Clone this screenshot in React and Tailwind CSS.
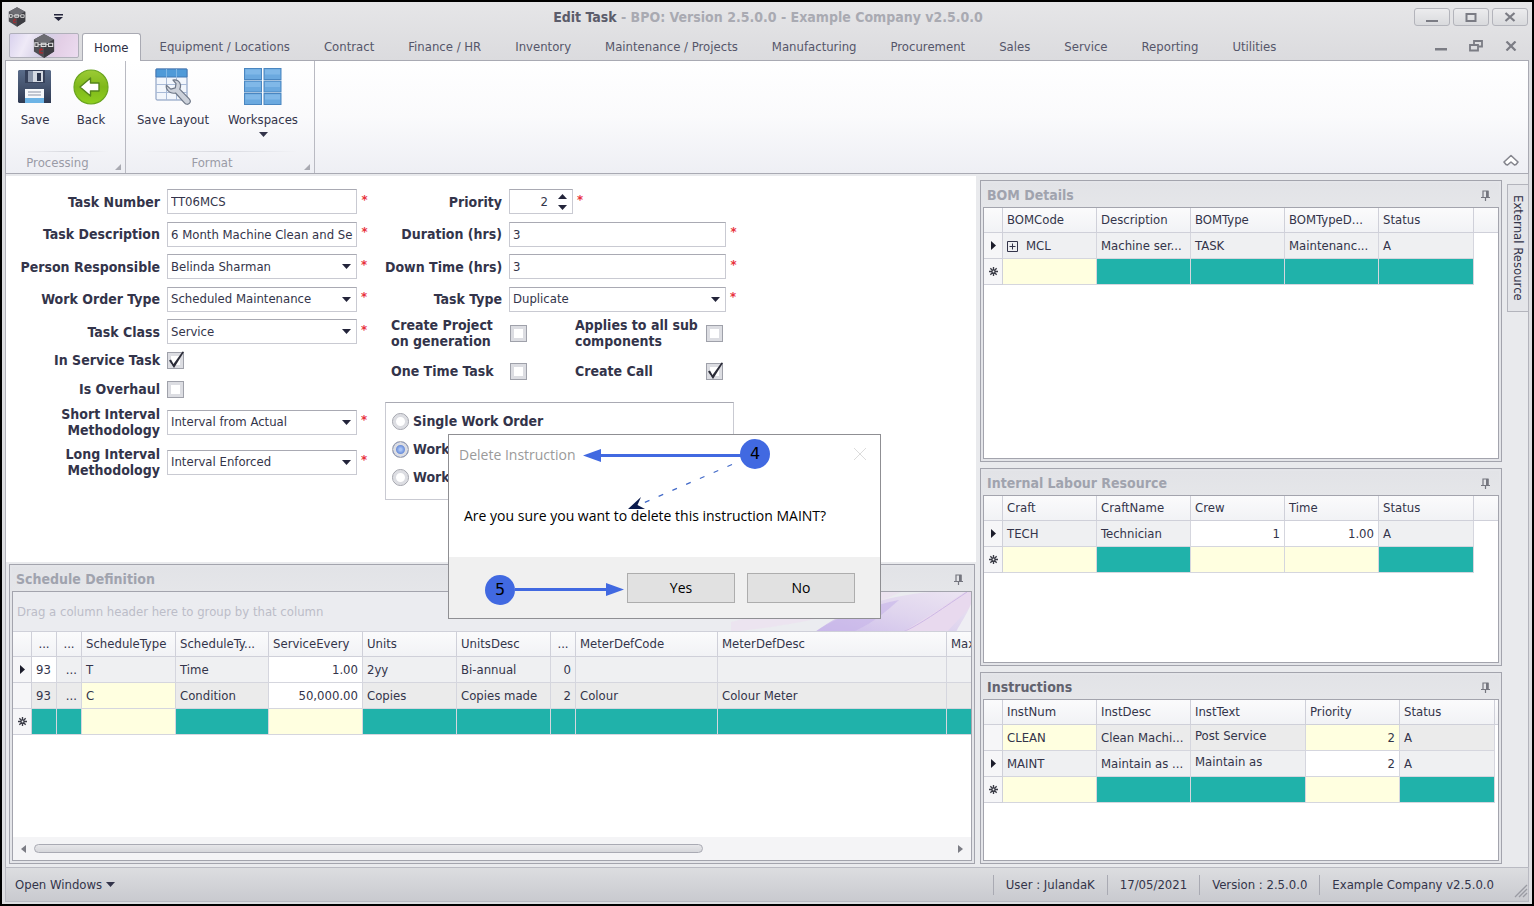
import React from "react";

const TABS = [
  "Equipment / Locations",
  "Contract",
  "Finance / HR",
  "Inventory",
  "Maintenance / Projects",
  "Manufacturing",
  "Procurement",
  "Sales",
  "Service",
  "Reporting",
  "Utilities",
];

/* ---------- icons ---------- */

function BpoLogo({ className }) {
  return (
    <svg viewBox="0 0 24 26" className={className} aria-hidden="true">
      <path d="M12 0 23 6v13l-11 7-11-7V6z" fill="#4f4f54" />
      <path d="M12 0 23 6l-11 6L1 6z" fill="#6c6c72" />
      <path d="M12 12v14l11-7V6z" fill="#3d3d42" />
      <path d="M2 9.500h3.500v4H2zM9 10h5v3.500H9zM17 10h4.500v3.500H17z" fill="none" stroke="#dcdcdc" strokeWidth="1.200" />
      <path d="M5.500 11.500h12" stroke="#dcdcdc" strokeWidth="1" />
      <path d="M11 17H7.500v3.500H11M9 15v3" fill="none" stroke="#b0282d" strokeWidth="1.200" />
    </svg>
  );
}

function Caret({ className = "w-[9px] h-[5px]" }) {
  return (
    <svg viewBox="0 0 9 5" className={className} aria-hidden="true">
      <path d="M0 0h9L4.500 5z" fill="currentColor" />
    </svg>
  );
}

function SaveIcon() {
  return (
    <svg viewBox="0 0 34 34" className="h-[34px] w-[34px]" aria-hidden="true">
      <defs>
        <linearGradient id="floppy" x1="0" y1="0" x2="0" y2="1">
          <stop offset="0" stopColor="#5a6c8a" />
          <stop offset="1" stopColor="#2f3a52" />
        </linearGradient>
      </defs>
      <path d="M1 0h31l1 1v32H1L0 32V1z" fill="url(#floppy)" />
      <path d="M7 0h20v13H7z" fill="#36415a" />
      <path d="M10 1h15v11H10z" fill="#d5dae3" />
      <path d="M10 1h5v11h-5z" fill="#8894a9" />
      <path d="M19 3h4v8h-4z" fill="#2d374e" />
      <path d="M7 19h19v14H7z" fill="#f7f9fc" />
      <path d="M7 28h19v5H7z" fill="#6db4e6" />
      <path d="M10 22h13M10 25h13" stroke="#8b93a5" strokeWidth="1" />
    </svg>
  );
}

function BackIcon() {
  return (
    <svg viewBox="0 0 36 36" className="h-9 w-9" aria-hidden="true">
      <defs>
        <linearGradient id="leaf" x1="0" y1="0" x2="0" y2="1">
          <stop offset="0" stopColor="#9ccb35" />
          <stop offset="0.500" stopColor="#7fb81b" />
          <stop offset="1" stopColor="#8fcf1f" />
        </linearGradient>
      </defs>
      <circle cx="18" cy="18" r="17" fill="url(#leaf)" stroke="#6aa51f" strokeWidth="1.200" />
      <path d="M7 18 17.500 9v5H26v8h-8.500v5z" fill="#fff" stroke="#55851b" strokeWidth="1.400" strokeLinejoin="round" />
    </svg>
  );
}

function LayoutIcon() {
  return (
    <svg viewBox="0 0 36 38" className="h-[38px] w-9" aria-hidden="true">
      <rect x="1" y="1" width="31" height="31" rx="1" fill="#f2f6fc" stroke="#7d93ba" />
      <path d="M1 1h31v8H1z" fill="#4f9ad8" stroke="#4279b4" />
      <path d="M11.500 1v8M21.500 1v8" stroke="#7fb6e4" />
      <path d="M11.500 9v23M21.500 9v23M1 16.500h31M1 24.500h31" stroke="#a9bbd8" fill="none" />
      <path
        d="M18 12c3.500-.8 7 1.200 7.500 4.800.2 1.700-.1 3.200-.8 4.400l9.500 9.600c1.300 1.400 1.300 3.400.1 4.600s-3.300 1.200-4.600-.2L20.500 25c-3.500.9-7.300-.8-8.800-4.200-.5-1.200-.6-2.300-.3-3.600l4.400 3.900 4.500-1.300.7-4.200z"
        fill="#ccd1da"
        stroke="#6f7888"
        strokeWidth="1.200"
        strokeLinejoin="round"
      />
    </svg>
  );
}

function WorkspacesIcon() {
  const cells = [];
  for (let r = 0; r < 3; r += 1) {
    for (let c = 0; c < 2; c += 1) {
      cells.push(
        <g key={`${r}-${c}`}>
          <rect x={0.5 + c * 19.5} y={0.5 + r * 12.5} width="17" height="11" fill="#6ba9df" stroke="#4a86c0" />
          <path d={`M${1.5 + c * 19.5} ${1.5 + r * 12.5}h15v5h-15z`} fill="#80b8e8" />
        </g>
      );
    }
  }
  return (
    <svg viewBox="0 0 38 38" className="h-[38px] w-[38px]" aria-hidden="true">
      {cells}
    </svg>
  );
}

function PinIcon() {
  return (
    <svg viewBox="0 0 9 11" className="h-[11px] w-[9px]" aria-hidden="true">
      <path d="M2 7V1h5v6M0 7.500h9M4.500 7.500V11" fill="none" stroke="#75767f" strokeWidth="1.200" />
      <path d="M5 1h2.500v6H5z" fill="#75767f" />
    </svg>
  );
}

function NewRowIcon() {
  return (
    <svg viewBox="0 0 10 10" className="mx-auto h-[9px] w-[9px]" aria-hidden="true">
      <path d="M5 0v10M0 5h10M1.500 1.500l7 7M8.500 1.500l-7 7" stroke="#3a3b46" strokeWidth="1.500" />
      <circle cx="5" cy="5" r="1" fill="#f4f4f6" />
    </svg>
  );
}

function CurrentRowIcon() {
  return (
    <svg viewBox="0 0 5 9" className="mx-auto h-[9px] w-[5px]" aria-hidden="true">
      <path d="M0 0 5 4.500 0 9z" fill="#1c1d2b" />
    </svg>
  );
}

/* ---------- form parts ---------- */

const FIELD =
  "h-[25px] w-full appearance-none rounded-none border border-[#c9cad2] border-t-[#a9aab3] bg-white px-[3px] text-[13px] text-[#33344a] outline-none";

function Star() {
  return <span className="h-5 w-3 pl-1 text-[13px] font-bold leading-4 text-[#e8323c]" aria-hidden="true">*</span>;
}

function Label({ id, children, right = true }) {
  return (
    <label
      htmlFor={id}
      className={`whitespace-nowrap text-[14px] font-bold leading-4 text-[#33344a] ${right ? "pr-[7px] text-right" : "text-left"}`}
    >
      {children}
    </label>
  );
}

function TextField({ id, value }) {
  return (
    <div className="flex items-center">
      <input id={id} type="text" defaultValue={value} className={FIELD} />
      <Star />
    </div>
  );
}

function SelectField({ id, value }) {
  return (
    <div className="flex items-center">
      <div className="relative flex-1">
        <select id={id} defaultValue={value} className={FIELD}>
          <option>{value}</option>
        </select>
        <span className="pointer-events-none absolute inset-y-0 right-[6px] flex items-center text-[#23243a]">
          <Caret />
        </span>
      </div>
      <Star />
    </div>
  );
}

function CheckField({ id, checked = false }) {
  return (
    <span className="relative block h-[17px] w-[17px]">
      <input
        id={id}
        type="checkbox"
        defaultChecked={checked}
        className="block h-[17px] w-[17px] appearance-none border border-[#9fa1aa] bg-white shadow-[inset_0_0_0_3px_#dcdde2]"
      />
      {checked && (
        <svg viewBox="0 0 17 17" className="pointer-events-none absolute inset-0 h-[17px] w-[17px] overflow-visible" aria-hidden="true">
          <path d="M2 8.500 4 7.500l2.500 4.500L15.500-.5 17 0 7 16z" fill="#2b2c38" />
        </svg>
      )}
    </span>
  );
}

function RadioField({ id, label, checked = false }) {
  return (
    <div className="flex h-7 items-center gap-1">
      <input
        id={id}
        type="radio"
        name="grouping"
        defaultChecked={checked}
        className={`h-[17px] w-[17px] appearance-none rounded-full border border-[#9fa1aa] shadow-[inset_0_0_0_3px_#dcdde2] ${
          checked ? "bg-[radial-gradient(circle,#a9c4f5_10%,#4a72cc_55%)]" : "bg-white"
        }`}
      />
      <Label id={id} right={false}>
        {label}
      </Label>
    </div>
  );
}

/* ---------- panels and grids ---------- */

function Panel({ title, active = false, className, children }) {
  return (
    <section className={`flex min-w-0 flex-col border border-[#a3a4ad] bg-[#e4e5e9] p-[2px] ${className}`}>
      <header className="flex h-6 shrink-0 items-center justify-between bg-gradient-to-b from-[#e2e3e7] to-[#e5e6e9] pl-1 pr-[9px]">
        <h2 className={`text-[14px] font-bold leading-5 ${active ? "text-[#62636f]" : "text-[#a0a3ae]"}`}>{title}</h2>
        <button type="button" aria-label={`Pin ${title}`}>
          <PinIcon />
        </button>
      </header>
      <div className="flex min-h-0 flex-1 flex-col overflow-hidden border border-[#a3a4ad] bg-white">{children}</div>
    </section>
  );
}

const TONES = {
  g: "bg-[#eff0f2]",
  d: "bg-[#ebebeb]",
  w: "bg-white",
  y: "bg-[#ffffe0]",
  t: "bg-[#20b2aa]",
};

function Grid({ label, widths, heads, rows, filler = true }) {
  return (
    <table aria-label={label} className="w-full table-fixed border-separate border-spacing-0 text-[13px] leading-5 text-[#33344a]">
      <colgroup>
        <col className="w-[19px]" />
        {widths.map((w, i) => (
          <col key={i} className={w} />
        ))}
        {filler && <col />}
      </colgroup>
      <thead>
        <tr className="h-[25px] bg-gradient-to-b from-[#fbfbfc] to-[#f1f2f5]">
          <th className="border-b border-r border-[#cfd0d9]" />
          {heads.map((h, i) => (
            <th
              key={i}
              scope="col"
              className={`whitespace-nowrap border-b border-r border-[#cfd0d9] px-1 font-normal ${h === "..." ? "text-center" : "text-left"}`}
            >
              {h}
            </th>
          ))}
          {filler && <th className="border-b border-[#cfd0d9]" />}
        </tr>
      </thead>
      <tbody>
        {rows.map((row, r) => (
          <tr key={r} className="h-[26px]">
            <td className="border-b border-r border-[#cfd0d9] bg-[#f6f6f8]">
              {row.mark === "new" && <NewRowIcon />}
              {row.mark === "current" && <CurrentRowIcon />}
            </td>
            {row.cells.map(([tone, text, align], c) => (
              <td
                key={c}
                className={`whitespace-nowrap border-b border-r border-[#d5d6de] px-1 ${TONES[tone]} ${
                  align === "r" ? "text-right" : align === "top" ? "pb-1" : ""
                }`}
              >
                {text}
              </td>
            ))}
            {filler && <td />}
          </tr>
        ))}
      </tbody>
    </table>
  );
}

function PlusBox() {
  return (
    <button type="button" aria-label="Expand" className="mr-2 inline-block align-middle">
      <svg viewBox="0 0 11 11" className="block h-[11px] w-[11px]" aria-hidden="true">
        <path d="M.5.5h10v10H.5zM2.500 5.500h6M5.500 2.500v6" fill="none" stroke="#33344a" />
      </svg>
    </button>
  );
}

/* ---------- page sections ---------- */

function TitleBar() {
  const btn =
    "flex h-[18px] w-9 items-center justify-center rounded-[3px] border border-[#b3b4bb] bg-gradient-to-b from-[#ececee] to-[#d9dadd] text-[#7b7c84]";
  return (
    <header className="flex h-[30px] items-center justify-between pl-[6px] pr-1">
      <div className="flex w-36 items-center gap-7">
        <BpoLogo className="h-5 w-[18px]" />
        <button type="button" aria-label="Customise quick access" className="text-[#23243a]">
          <svg viewBox="0 0 9 7" className="h-[7px] w-[9px]" aria-hidden="true">
            <path d="M0 0h9v1.500H0zM0 3h9L4.500 7z" fill="currentColor" />
          </svg>
        </button>
      </div>
      <h1 className="text-[14px] font-bold text-[#a9aab2]">
        <span className="text-[#5b5c6a]">Edit Task</span> - BPO: Version 2.5.0.0 - Example Company v2.5.0.0
      </h1>
      <div className="flex w-36 justify-end gap-[3px]">
        <button type="button" aria-label="Minimise" className={btn}>
          <svg viewBox="0 0 12 10" className="h-[10px] w-3"><path d="M0 8h12v2H0z" fill="currentColor" /></svg>
        </button>
        <button type="button" aria-label="Maximise" className={btn}>
          <svg viewBox="0 0 12 10" className="h-[10px] w-3"><path d="M1.500 2h9v7h-9z" fill="none" stroke="currentColor" strokeWidth="2" /></svg>
        </button>
        <button type="button" aria-label="Close" className={btn}>
          <svg viewBox="0 0 12 10" className="h-[10px] w-3"><path d="m1.500 1 9 8M10.500 1l-9 8" stroke="currentColor" strokeWidth="2.200" /></svg>
        </button>
      </div>
    </header>
  );
}

function TabBar() {
  return (
    <nav className="flex h-7 items-end pl-[7px] pr-[15px]" aria-label="Ribbon tabs">
      <button
        type="button"
        aria-label="Application menu"
        className="mb-[2px] flex h-[25px] w-[70px] shrink-0 items-center justify-center rounded-[2px] border border-[#b0b0ba] bg-[linear-gradient(115deg,#d9d2ee_0%,#efeaf7_25%,#d5cfe6_50%,#e3cfe6_70%,#ecdcf0_100%)]"
      >
        <BpoLogo className="h-6 w-[22px]" />
      </button>
      <a
        href="#home"
        className="relative z-10 -mb-px ml-[3px] flex h-7 shrink-0 items-center rounded-t-[3px] border border-b-0 border-[#a9aab3] bg-white px-[11px] text-[13px] text-[#2c2d42]"
      >
        Home
      </a>
      <div className="ml-[2px] flex h-[26px] min-w-0 flex-1 items-center">
        {TABS.map((t) => (
          <a key={t} href="#ribbon" className="whitespace-nowrap px-[17px] text-[13px] text-[#55566a]">
            {t}
          </a>
        ))}
      </div>
      <div className="flex h-7 items-center gap-[22px] text-[#7b7c84]">
        <button type="button" aria-label="Minimise document">
          <svg viewBox="0 0 12 10" className="h-[10px] w-3"><path d="M0 7h12v2.500H0z" fill="currentColor" /></svg>
        </button>
        <button type="button" aria-label="Restore document">
          <svg viewBox="0 0 14 12" className="h-3 w-[14px]">
            <path d="M5 4V1h8v5.500H9.500M1 5h8v5.500H1z" fill="none" stroke="currentColor" strokeWidth="1.800" />
          </svg>
        </button>
        <button type="button" aria-label="Close document">
          <svg viewBox="0 0 12 10" className="h-[10px] w-3"><path d="m1.500.5 9 9M10.500.5l-9 9" stroke="currentColor" strokeWidth="2.200" /></svg>
        </button>
      </div>
    </nav>
  );
}

function RibbonGroup({ name, className, children }) {
  return (
    <div className={`flex flex-col border-r border-[#b9bac2] ${className}`}>
      <div className="flex flex-1 items-start pl-px">{children}</div>
      <div className="mx-4 h-px bg-gradient-to-r from-transparent via-[#d8d9df] to-transparent" />
      <div className="relative flex h-[21px] items-center justify-center pr-4 text-[13px] text-[#9a9ba6]">
        {name}
        <svg viewBox="0 0 6 6" className="absolute bottom-[3px] right-1 h-[6px] w-[6px]" aria-hidden="true">
          <path d="M6 0v6H0z" fill="#a9aab2" />
        </svg>
      </div>
    </div>
  );
}

function RibbonButton({ icon, label, menu = false, className }) {
  return (
    <button type="button" className={`flex flex-col items-center text-[13px] text-[#33344a] ${className}`}>
      <span className="flex h-[51px] items-center">{icon}</span>
      <span className="h-4 whitespace-nowrap leading-4">{label}</span>
      {menu && (
        <span className="mt-1">
          <Caret />
        </span>
      )}
    </button>
  );
}

function Ribbon() {
  return (
    <div className="mx-[3px] flex h-[114px] border border-[#a9aab3] bg-gradient-to-b from-white via-[#fafafc] to-[#eeeff4]">
      <RibbonGroup name="Processing" className="w-[120px]">
        <RibbonButton icon={<SaveIcon />} label="Save" className="w-14" />
        <RibbonButton icon={<BackIcon />} label="Back" className="w-14" />
      </RibbonGroup>
      <RibbonGroup name="Format" className="w-[189px]">
        <RibbonButton icon={<LayoutIcon />} label="Save Layout" className="w-[92px]" />
        <RibbonButton icon={<WorkspacesIcon />} label="Workspaces" menu className="w-[88px]" />
      </RibbonGroup>
      <div className="flex flex-1 items-end justify-end pb-[6px] pr-[9px]">
        <button type="button" aria-label="Collapse ribbon">
          <svg viewBox="0 0 16 13" className="h-[13px] w-4" aria-hidden="true">
            <path d="M8 1.500 15 8l-2 2.500-1.500.5L8 8l-3.500 3L3 10.500 1 8z" fill="#fff" stroke="#85868e" strokeWidth="1.600" strokeLinejoin="round" />
          </svg>
        </button>
      </div>
    </div>
  );
}

function TaskForm() {
  return (
    <form className="flex min-h-0 flex-1 items-start bg-white pt-[9px]">
      <div className="grid w-[363px] grid-cols-[161px_1fr] grid-rows-[33px_32px_33px_32px_33px_24px_34px_32px_48px] items-center">
        <Label id="num">Task Number</Label>
        <TextField id="num" value="TT06MCS" />
        <Label id="desc">Task Description</Label>
        <TextField id="desc" value="6 Month Machine Clean and Service" />
        <Label id="person">Person Responsible</Label>
        <SelectField id="person" value="Belinda Sharman" />
        <Label id="wot">Work Order Type</Label>
        <SelectField id="wot" value="Scheduled Maintenance" />
        <Label id="cls">Task Class</Label>
        <SelectField id="cls" value="Service" />
        <Label id="inservice">In Service Task</Label>
        <CheckField id="inservice" checked />
        <Label id="overhaul">Is Overhaul</Label>
        <CheckField id="overhaul" />
        <Label id="short">
          Short Interval
          <br />
          Methodology
        </Label>
        <SelectField id="short" value="Interval from Actual" />
        <Label id="long">
          Long Interval
          <br />
          Methodology
        </Label>
        <SelectField id="long" value="Interval Enforced" />
      </div>

      <div className="ml-4 w-[353px]">
        <div className="grid grid-cols-[124px_1fr] grid-rows-[33px_32px_33px_32px] items-center">
          <Label id="prio">Priority</Label>
          <div className="flex items-center">
            <div className="relative w-16">
              <input id="prio" type="text" defaultValue="2" className={`${FIELD} pr-6 text-right`} />
              <span className="absolute inset-y-0 right-[6px] flex flex-col items-center justify-center gap-[6px] text-[#23243a]">
                <button type="button" aria-label="Increase priority">
                  <Caret className="block h-[5px] w-[9px] rotate-180" />
                </button>
                <button type="button" aria-label="Decrease priority">
                  <Caret className="block h-[5px] w-[9px]" />
                </button>
              </span>
            </div>
            <Star />
          </div>
          <Label id="dur">Duration (hrs)</Label>
          <TextField id="dur" value="3" />
          <Label id="down">Down Time (hrs)</Label>
          <TextField id="down" value="3" />
          <Label id="type">Task Type</Label>
          <SelectField id="type" value="Duplicate" />
        </div>
        <div className="grid grid-cols-[119px_65px_131px_1fr] grid-rows-[36px_40px] items-center pl-[6px]">
          <Label id="create" right={false}>
            Create Project
            <br />
            on generation
          </Label>
          <CheckField id="create" />
          <Label id="applies" right={false}>
            Applies to all sub
            <br />
            components
          </Label>
          <CheckField id="applies" />
          <Label id="once" right={false}>One Time Task</Label>
          <CheckField id="once" />
          <Label id="call" right={false}>Create Call</Label>
          <CheckField id="call" checked />
        </div>
        <fieldset className="mr-1 mt-[11px] h-[98px] border border-[#c9cad2] border-t-[#a9aab3] pl-[6px] pt-1">
          <RadioField id="r1" label="Single Work Order" />
          <RadioField id="r2" label="Work" checked />
          <RadioField id="r3" label="Work" />
        </fieldset>
      </div>
    </form>
  );
}

function SchedulePanel() {
  return (
    <Panel title="Schedule Definition" className="ml-[3px] mr-px h-[300px] shrink-0">
      <div className="relative flex h-10 shrink-0 items-center justify-between overflow-hidden border-b border-[#cfd0d9] bg-[#ebecf0] pl-1">
        <p className="whitespace-nowrap text-[13px] text-[#bcbdc8]">Drag a column header here to group by that column</p>
        <svg viewBox="0 0 240 40" className="h-10 w-60" aria-hidden="true">
          <defs>
            <linearGradient id="petal" x1="0" y1="1" x2="1" y2="0">
              <stop offset="0" stopColor="#c9b8ea" />
              <stop offset="0.500" stopColor="#ded2ee" />
              <stop offset="1" stopColor="#ece4f2" />
            </linearGradient>
          </defs>
          <path d="M0 40C60 34 130 20 170 0h-60L0 30z" fill="#ecdff0" opacity="0.600" />
          <path d="M84 40C110 20 150 4 200 0h40v40z" fill="url(#petal)" opacity="0.900" />
          <path d="M84 40C110 22 140 14 168 8c-14 12-24 22-46 32z" fill="#c6b4ea" opacity="0.600" />
          <path d="M172 40c20-12 40-26 62-40h6v14l-24 26z" fill="#e8d9ee" />
          <path d="M172 40c18-8 34-20 64-40" fill="none" stroke="#cdb8e6" />
          <path d="M225 40c4-8 10-16 15-28v28z" fill="#efeef3" />
        </svg>
      </div>
      <div className="flex-1 overflow-hidden">
        <div className="w-[1033px]">
          <Grid
            label="Schedule definition"
            filler={false}
            widths={["w-[25px]", "w-[25px]", "w-[94px]", "w-[93px]", "w-[94px]", "w-[94px]", "w-[94px]", "w-[25px]", "w-[142px]", "w-[229px]", "w-[99px]"]}
            heads={["...", "...", "ScheduleType", "ScheduleTy...", "ServiceEvery", "Units", "UnitsDesc", "...", "MeterDefCode", "MeterDefDesc", "Max"]}
            rows={[
              { mark: "current", cells: [["w", "93"], ["g", "...", "r"], ["g", "T"], ["g", "Time"], ["w", "1.00", "r"], ["g", "2yy"], ["g", "Bi-annual"], ["g", "0", "r"], ["g", ""], ["g", ""], ["g", ""]] },
              { cells: [["d", "93"], ["d", "...", "r"], ["y", "C"], ["d", "Condition"], ["w", "50,000.00", "r"], ["d", "Copies"], ["d", "Copies made"], ["d", "2", "r"], ["d", "Colour"], ["d", "Colour Meter"], ["d", ""]] },
              { mark: "new", cells: [["t"], ["t"], ["y"], ["t"], ["y"], ["t"], ["t"], ["t"], ["t"], ["t"], ["t"]] },
            ]}
          />
        </div>
      </div>
      <div className="flex h-[23px] shrink-0 items-center gap-2 bg-[#f4f4f6] px-2 text-[#7b7c84]">
        <svg viewBox="0 0 5 8" className="h-2 w-[5px]" aria-hidden="true"><path d="M5 0v8L0 4z" fill="currentColor" /></svg>
        <div className="flex-1">
          <div className="h-[9px] w-[73%] rounded-full border border-[#a9aab3] bg-gradient-to-b from-[#e6e6e9] to-[#d6d7db]" />
        </div>
        <svg viewBox="0 0 5 8" className="h-2 w-[5px]" aria-hidden="true"><path d="M0 0v8l5-4z" fill="currentColor" /></svg>
      </div>
    </Panel>
  );
}

function SidePanels() {
  const five = ["w-[94px]", "w-[94px]", "w-[94px]", "w-[94px]", "w-[95px]"];
  return (
    <div className="flex w-[522px] shrink-0 flex-col gap-[6px] pt-1">
      <Panel title="BOM Details" className="min-h-0 flex-1">
        <Grid
          label="BOM details"
          widths={five}
          heads={["BOMCode", "Description", "BOMType", "BOMTypeD...", "Status"]}
          rows={[
            { mark: "current", cells: [["g", <React.Fragment key="c"><PlusBox />MCL</React.Fragment>], ["g", "Machine ser..."], ["g", "TASK"], ["g", "Maintenanc..."], ["g", "A"]] },
            { mark: "new", cells: [["y"], ["t"], ["t"], ["t"], ["t"]] },
          ]}
        />
      </Panel>
      <Panel title="Internal Labour Resource" className="h-[198px] shrink-0">
        <Grid
          label="Internal labour resource"
          widths={five}
          heads={["Craft", "CraftName", "Crew", "Time", "Status"]}
          rows={[
            { mark: "current", cells: [["g", "TECH"], ["g", "Technician"], ["w", "1", "r"], ["w", "1.00", "r"], ["g", "A"]] },
            { mark: "new", cells: [["y"], ["t"], ["y"], ["y"], ["t"]] },
          ]}
        />
      </Panel>
      <Panel title="Instructions" active className="h-48 shrink-0">
        <Grid
          label="Instructions"
          widths={["w-[94px]", "w-[94px]", "w-[115px]", "w-[94px]", "w-[95px]"]}
          heads={["InstNum", "InstDesc", "InstText", "Priority", "Status"]}
          rows={[
            { cells: [["y", "CLEAN"], ["d", "Clean Machi..."], ["d", "Post Service", "top"], ["y", "2", "r"], ["d", "A"]] },
            { mark: "current", cells: [["g", "MAINT"], ["g", "Maintain as ..."], ["g", "Maintain as", "top"], ["w", "2", "r"], ["g", "A"]] },
            { mark: "new", cells: [["y"], ["t"], ["t"], ["y"], ["t"]] },
          ]}
        />
      </Panel>
    </div>
  );
}

function StatusBar() {
  return (
    <footer className="mx-[3px] mb-[2px] flex h-[35px] items-center border border-[#b9bac2] bg-gradient-to-b from-[#dcdde0] to-[#c9cacf] text-[13px] text-[#33344a]">
      <button type="button" className="flex items-center gap-1 pl-[9px]">
        Open Windows <Caret className="h-[5px] w-[9px]" />
      </button>
      <div className="ml-auto flex">
        {["User : JulandaK", "17/05/2021", "Version : 2.5.0.0", "Example Company v2.5.0.0"].map((s) => (
          <span key={s} className="border-l border-[#a9aab3] px-3 leading-5">
            {s}
          </span>
        ))}
      </div>
      <svg viewBox="0 0 14 14" className="ml-2 mt-3 h-[14px] w-[14px]" aria-hidden="true">
        <path d="M1 13 13 1M5 13l8-8M9 13l4-4" stroke="#9a9ba3" strokeWidth="1.300" />
      </svg>
    </footer>
  );
}

function DeleteDialog() {
  const btn =
    "h-[30px] w-[108px] border border-[#adadad] bg-[#e1e1e1] text-[14px] text-black";
  return (
    <div
      role="dialog"
      aria-labelledby="dlg-title"
      className="absolute left-[446px] top-[432px] z-20 flex h-[185px] w-[433px] flex-col border border-[#8f8f93] bg-white font-['Open_Sans','Noto_Sans',sans-serif]"
    >
      <div className="flex h-[38px] items-center justify-between pl-[10px] pr-[13px]">
        <h2 id="dlg-title" className="text-[14px] text-[#9a9a9a]">Delete Instruction</h2>
        <button type="button" aria-label="Close dialog">
          <svg viewBox="0 0 14 14" className="h-[14px] w-[14px]"><path d="m1 1 12 12M13 1 1 13" stroke="#dcdcdc" /></svg>
        </button>
      </div>
      <p className="flex flex-1 items-center pl-[15px] text-[14px] text-black">
        Are you sure you want to delete this instruction MAINT?
      </p>
      <div className="flex h-[61px] items-center justify-end gap-3 bg-[#f0f0f0] pr-[25px]">
        <button type="button" className={btn}>Yes</button>
        <button type="button" className={btn}>No</button>
      </div>
      <svg viewBox="0 0 431 183" className="pointer-events-none absolute inset-0 h-full w-full" aria-hidden="true">
        <path d="M152 20.500h140" stroke="#4169e1" strokeWidth="3" />
        <path d="M134 20.500 152 14v13z" fill="#4169e1" />
        <path d="M66 154.500h94" stroke="#4169e1" strokeWidth="3" />
        <path d="M175 154.500 157 148v13z" fill="#4169e1" />
        <path d="M283 29.500 192 69" stroke="#4169c8" strokeWidth="1.200" strokeDasharray="5 10" />
        <path d="M179 74 192 62l-3.500 8 7.500 4z" fill="#0b1b4d" />
      </svg>
      <span className="absolute left-[291px] top-1 flex h-[30px] w-[30px] items-center justify-center rounded-full bg-[#4169e1] font-['DejaVu_Sans',sans-serif] text-[16px] text-black">
        4
      </span>
      <span className="absolute left-9 top-[140px] flex h-[30px] w-[30px] items-center justify-center rounded-full bg-[#4169e1] font-['DejaVu_Sans',sans-serif] text-[16px] text-black">
        5
      </span>
    </div>
  );
}

export default function App() {
  return (
    <div className="relative flex h-screen flex-col border-2 border-black bg-[#dddee1] font-['DejaVu_Sans_Condensed','DejaVu_Sans',sans-serif]">
      <div className="bg-gradient-to-b from-[#e6e6e8] to-[#dbdbde]">
        <TitleBar />
        <TabBar />
      </div>
      <Ribbon />
      <main className="mx-[3px] flex min-h-0 flex-1 border-x border-[#b3b4bc] bg-[#e9eaed] pb-[3px] pt-[2px]">
        <div className="flex min-w-0 flex-1 flex-col gap-[2px]">
          <TaskForm />
          <SchedulePanel />
        </div>
        <div className="flex pl-1">
          <SidePanels />
        </div>
        <aside className="ml-[5px] pt-2">
          <button
            type="button"
            className="flex h-[128px] w-[21px] items-center justify-center border border-r-0 border-[#b3b4bc] bg-[#e4e5e9] text-[13px] text-[#33344a]"
          >
            <span className="whitespace-nowrap leading-5 [writing-mode:vertical-rl]">External Resource</span>
          </button>
        </aside>
      </main>
      <StatusBar />
      <DeleteDialog />
    </div>
  );
}
